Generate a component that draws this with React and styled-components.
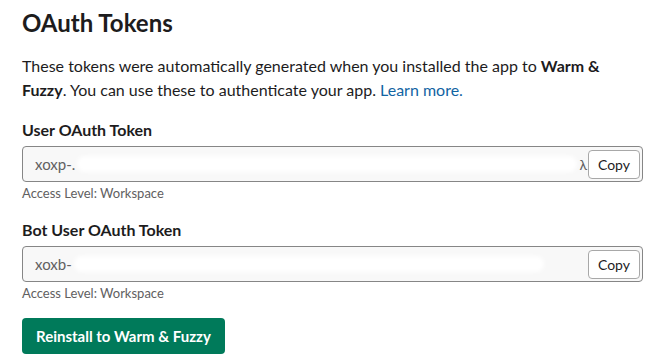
import React from 'react'
import styled, { createGlobalStyle } from 'styled-components'

const GlobalStyle = createGlobalStyle`
  body {
    margin: 0;
    background: #ffffff;
    font-family: Lato, "Noto Sans", sans-serif;
    color: #1d1c1d;
  }
`;

const Page = styled.div`
  padding: 7px 14px 0 22px;
  display: flex;
  flex-direction: column;
`;

const Title = styled.h1`
  margin: 0;
  font-size: 24px;
  font-weight: 700;
  line-height: 32px;
`;

const Intro = styled.p`
  margin: 15px 0 0;
  font-size: 16px;
  line-height: 24px;
  max-width: 590px;

  b { font-weight: 700; }
`;

const Link = styled.a`
  color: #1264a3;
  text-decoration: none;
`;

const Field = styled.div`
  display: flex;
  flex-direction: column;
  margin-top: 17px;
`;

const Label = styled.div`
  font-size: 16px;
  font-weight: 700;
  line-height: 22px;
  margin-bottom: 5px;
`;

const TokenBox = styled.div`
  height: 36px;
  box-sizing: border-box;
  border: 1px solid #868686;
  border-radius: 4px;
  background: #f8f8f8;
  display: flex;
  align-items: center;
  padding: 0 2px 0 12px;
  overflow: hidden;
`;

const TokenText = styled.span`
  font-size: 15px;
  color: #616061;
  white-space: nowrap;
`;

const Smear = styled.span`
  flex: 0 0 ${p => p.$w}px;
  height: 16px;
  margin-left: 2px;
  background: #ffffff;
  border-radius: 10px;
  filter: blur(2px);
`;

const Spacer = styled.span`
  flex: 1;
`;

const Glyph = styled.span`
  font-size: 14px;
  color: #616061;
  margin-right: 1px;
`;

const CopyButton = styled.button`
  height: 29px;
  padding: 0 9px;
  background: #ffffff;
  border: 1px solid #a8a8a8;
  border-radius: 4px;
  font-family: Lato, "Noto Sans", sans-serif;
  font-size: 14px;
  color: #1d1c1d;
  cursor: pointer;
`;

const Hint = styled.div`
  font-size: 13px;
  color: #616061;
  line-height: 18px;
  margin-top: 2px;
`;

const Primary = styled.button`
  align-self: flex-start;
  margin-top: 16px;
  height: 36px;
  padding: 0 14px;
  background: #007a5a;
  color: #ffffff;
  border: none;
  border-radius: 4px;
  font-family: Lato, "Noto Sans", sans-serif;
  font-size: 15px;
  font-weight: 700;
  cursor: pointer;
`;

function TokenField({ label, prefix, smear, tail }) {
  return (
    <Field>
      <Label>{label}</Label>
      <TokenBox>
        <TokenText>{prefix}</TokenText>
        <Smear $w={smear} />
        <Spacer />
        {tail && <Glyph>{tail}</Glyph>}
        <CopyButton>Copy</CopyButton>
      </TokenBox>
      <Hint>Access Level: Workspace</Hint>
    </Field>
  );
}

export default function App() {
  return (
    <>
      <GlobalStyle />
      <Page>
        <Title>OAuth Tokens</Title>
        <Intro>
          These tokens were automatically generated when you installed the app to <b>Warm &amp; Fuzzy</b>. You can use these to authenticate your app. <Link href="#">Learn more.</Link>
        </Intro>
        <TokenField label="User OAuth Token" prefix="xoxp-." smear={500} tail="λ" />
        <TokenField label="Bot User OAuth Token" prefix="xoxb-" smear={470} />
        <Primary>Reinstall to Warm &amp; Fuzzy</Primary>
      </Page>
    </>
  );
}
